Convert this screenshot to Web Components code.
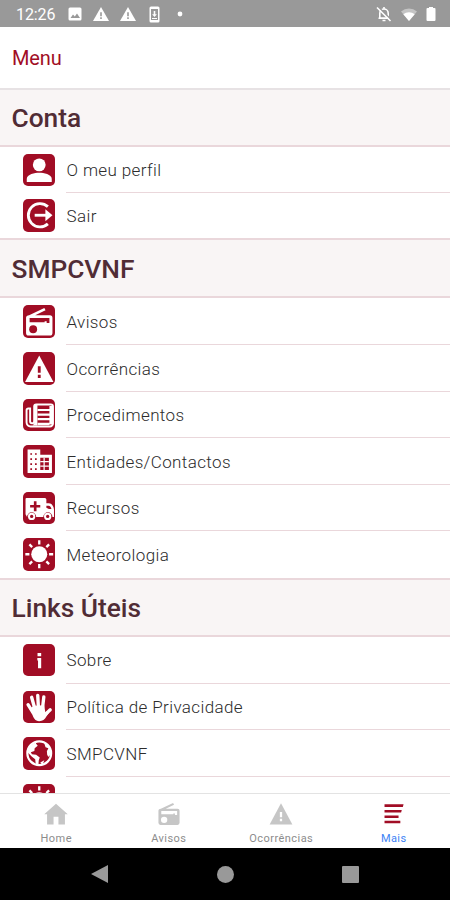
<!DOCTYPE html>
<html lang="pt">
<head>
<meta charset="utf-8">
<meta name="viewport" content="width=device-width, initial-scale=1">
<title>Menu</title>
<style>
    html, body { margin: 0; height: 100%; }
    body {
        font-family: Roboto, "Liberation Sans", sans-serif;
        background: #fff;
        overflow: hidden;
        --primary: #a10d25;
        --line: #ead7db;
    }
</style>
</head>
<body>
<app-screen>
    <status-bar slot="status"></status-bar>
    <app-toolbar slot="toolbar">Menu</app-toolbar>

    <menu-section style="--head: 57px; --row: 45.7px; --top: 0px; --drop: 0px">
        <span slot="title">Conta</span>
        <menu-item icon="person">O meu perfil</menu-item>
        <menu-item icon="exit">Sair</menu-item>
    </menu-section>
    <menu-section>
        <span slot="title">SMPCVNF</span>
        <menu-item icon="radio">Avisos</menu-item>
        <menu-item icon="warning">Ocorrências</menu-item>
        <menu-item icon="paper">Procedimentos</menu-item>
        <menu-item icon="building">Entidades/Contactos</menu-item>
        <menu-item icon="ambulance">Recursos</menu-item>
        <menu-item icon="sun">Meteorologia</menu-item>
    </menu-section>
    <menu-section style="--head: 59px">
        <span slot="title">Links Úteis</span>
        <menu-item icon="info">Sobre</menu-item>
        <menu-item icon="hand">Política de Privacidade</menu-item>
        <menu-item icon="globe">SMPCVNF</menu-item>
        <menu-item icon="sun"></menu-item>
    </menu-section>

    <tab-bar slot="tabs">
        <tab-button icon="home">Home</tab-button>
        <tab-button icon="radio">Avisos</tab-button>
        <tab-button icon="warning">Ocorrências</tab-button>
        <tab-button icon="list" selected>Mais</tab-button>
    </tab-bar>
    <nav-bar slot="nav"></nav-bar>
</app-screen>

<script>
(function () {

    // 32x32 shapes; class "hole" takes the colour behind the icon
    const icons = {
        person: `<circle cx="16" cy="10.700" r="6.300"/><path d="M3.700 27.500v-3c0-4.400 8-6 12.300-6s12.300 1.600 12.300 6v3z"/>`,
        exit: `<g fill="none" stroke="currentColor" stroke-width="2.800"><path d="M24.500 7.500A11.500 11.500 0 1 0 24.500 24.500"/><path d="M11.500 16H25"/></g><path d="M22 10l7 6-7 6z"/>`,
        radio: `<path d="M6 10L21 3l1.200 2.200L12 10h14.500a2.500 2.500 0 0 1 2.500 2.500v15a2.500 2.500 0 0 1-2.500 2.500h-21A2.500 2.500 0 0 1 3 27.500v-15C3 11 4.200 10 6 10z"/><path class="hole" d="M6.500 12.800h19.500v5h-2.700v-1.800h-2V17H6.500z"/><circle class="hole" cx="10" cy="23.800" r="3.900"/>`,
        warning: `<path d="M16 3.500L30 29.500H2z"/><path class="hole" d="M14.600 14h2.800v6.500h-2.800zm0 8.500h2.800v3h-2.800z"/>`,
        paper: `<path fill="none" stroke="currentColor" stroke-width="1.900" d="M11 7.500a2 2 0 0 1 2-2h14.500a2 2 0 0 1 2 2V24a3 3 0 0 1-3 3h-19a4 4 0 0 1-4-4V11a1.700 1.700 0 0 1 1.700-1.700H7V22a2 2 0 0 0 4 0z"/><path d="M11 6h3.200v20H9.500l1.500-2zM14.500 9.800H26v2.100H14.500zm0 4.500H26v2.100H14.500zm0 4.500H26v2.100H14.500zm0 4.500H26v2.500H14.500zM26 7h3v18h-3z"/>`,
        building: `<path d="M4.500 4.500H17V9.500H28.500v18H4.500z"/><path class="hole" d="M7.200 8h1.700v1.700H7.200zm4.600 0h1.700v1.700h-1.700zM7.200 13h1.700v1.700H7.200zm4.600 0h1.700v1.700h-1.700zM7.200 18h1.700v1.700H7.200zm4.600 0h1.700v1.700h-1.700zM7.200 23h1.700v1.700H7.200zm4.600 0h1.700v1.700h-1.700zM17 12.500h8.500v12.200H17z"/><path d="M20.200 12.500h1.200v12.200h-1.200zM17 15.800h8.500V17H17zm0 4.300h8.500v1.200H17z"/>`,
        ambulance: `<path d="M3.500 6h18A1.500 1.500 0 0 1 23 7.500V11h2.500c3 0 5 3.500 5 6.500v7H29a4.500 4.500 0 0 0-9 0h-7a4.500 4.500 0 0 0-9 0L2.500 22V7A1 1 0 0 1 3.500 6z"/><path class="hole" d="M10.700 9h2.600v3.700H17v2.600h-3.700V19h-2.600v-3.700H7v-2.600h3.700zM23 13.500h2.200c1.500 0 2.500 1.500 2.800 3.300h-2.500L23 15.500z"/><circle cx="8.500" cy="24" r="3.600"/><circle cx="24.300" cy="24" r="3.600"/><g class="hole"><circle cx="8.500" cy="24" r="1.600"/><circle cx="24.300" cy="24" r="1.600"/></g>`,
        sun: `<circle cx="16" cy="16" r="7.900"/><path fill="none" stroke="currentColor" stroke-width="2.300" d="M16 2.300v4M16 25.700v4M2.300 16h4M25.700 16h4M6.300 6.300l2.700 2.700M23 23l2.700 2.700M6.300 25.700L9 23M23 9l2.700-2.700"/>`,
        info: `<path d="M14.300 8.800h3.600v3.200h-3.600zm-.200 5h3.800v10h-3.100v-7.600h-.700z"/>`,
        hand: `<path fill="none" stroke="currentColor" stroke-width="3.300" stroke-linecap="round" d="M5 13.500l5 8M8.500 6.200l3.500 12.500M14.500 4.300l.800 14M20.500 5.800l-1.500 13M26.800 18.500l-5.300 5"/><path d="M7.500 17l3-2.500 10.300-.500 1.200 7 2.500-1.500 1 2.200-2.500 3.500c-1.500 2.800-3.700 4.600-7 4.600-4.200 0-5.700-3.300-6.700-6.300z"/>`,
        globe: `<circle cx="16" cy="16" r="11.700" fill="none" stroke="currentColor" stroke-width="2.200"/><path d="M14.500 4.200l-1.800 2.300 1.800 2-3 2.500-.300 2.700-3.500 1.200 1.100 2.100 4.100.500 3.600 2.600-1 3-.300 4.200-2.700-1-.500-4.300-3.200-2.600L4.500 15 7 8.500zM21 6.500l1-.700 5 5.700 1 5.500-2.300 1.700-.700 1-1.200-2.200-.300-3.500 1.500-3-2.800-1zM17 25l4-2-1.800 4.500z"/>`,
        home: `<path d="M16 4L1.500 17H5v12.500h8V20h6v9.500h8V17h3.500z"/>`,
        list: `<path d="M3.500 3.300h26.500l-1 3.500H3.500zm0 8h24l-.900 3.400H3.500zm0 7.600h19.500v3.200H3.500zm0 7.200h22v3.500h-22z"/>`
    };

    function svg(name) {
        return `<svg viewBox="0 0 32 32" fill="currentColor">${icons[name] || ''}</svg>`;
    }

    function define(tag, html) {
        customElements.define(tag, class extends HTMLElement {
            constructor() {
                super();
                this.attachShadow({ mode: 'open' });
                this.shadowRoot.innerHTML = typeof html == 'function' ? html(this) : html;
            }
        });
    }

    define('app-screen', `
        <style>
        :host { display: flex; flex-direction: column; height: 900px; width: 450px; overflow: hidden; }
        main { flex: 1; min-height: 0; overflow: hidden; }
        </style>
        <slot name="status"></slot>
        <slot name="toolbar"></slot>
        <main><slot></slot></main>
        <slot name="tabs"></slot>
        <slot name="nav"></slot>
    `);

    define('status-bar', `
        <style>
        :host { display: flex; align-items: center; height: 27px; flex: none; box-sizing: border-box; padding: 1px 14px 0 16px; background: #999; color: #fff; font-size: 16px; }
        .time { width: 52px; letter-spacing: -.1px; }
        .left { display: flex; align-items: center; gap: 11px; flex: 1; }
        .right { display: flex; align-items: center; gap: 9px; }
        .hole { fill: #999; }
        svg { display: block; }
        </style>
        <span class="time">12:26</span>
        <div class="left">
            <svg width="14" height="14" fill="#fff"><rect x=".5" y=".5" width="13" height="13" rx="1.500"/><path class="hole" d="M2.500 11l2.500-3.500 1.800 2 2.200-3 3 4.500z"/></svg>
            <svg width="16" height="14" fill="#fff"><path d="M8 0l8 14H0z"/><path class="hole" d="M7.200 5.300h1.600v4H7.200zm0 5h1.600v1.700H7.200z"/></svg>
            <svg width="16" height="14" fill="#fff"><path d="M8 0l8 14H0z"/><path class="hole" d="M7.200 5.300h1.600v4H7.200zm0 5h1.600v1.700H7.200z"/></svg>
            <svg width="11" height="17" style="margin-left: 2px" fill="#fff"><rect x=".500" y=".500" width="10" height="16" rx="1.500"/><path class="hole" d="M2 3h7v11H2z"/><path d="M4.700 5h1.600v3.300h1.600L5.500 11 3.100 8.300h1.600zM3 12h5v1H3z"/></svg>
            <svg width="6" height="6" style="margin-left: 6px" fill="#fff"><circle cx="3" cy="3" r="2.400"/></svg>
        </div>
        <div class="right">
            <svg width="16" height="16" fill="none" stroke="#fff"><path stroke-width="1.600" d="M3.800 12V7.200a4.200 4.200 0 0 1 8.400 0V12zM2.500 12.200h11M8 1v2M6.500 14.500h3"/><path stroke="#999" stroke-width="1.500" d="M2.500 1L15.500 14"/><path stroke-width="1.600" d="M1 1.500L14.500 15"/></svg>
            <svg width="16" height="13" fill="#fff"><path fill="#c4c4c4" d="M0 3.500a12.500 12.500 0 0 1 16 0L8 13z"/><path d="M2.300 6.200a9 9 0 0 1 11.400 0L8 13z"/></svg>
            <svg width="10" height="14" fill="#fff"><path d="M3 0h4v1h1.500a1 1 0 0 1 1 1v11a1 1 0 0 1-1 1h-7a1 1 0 0 1-1-1V2a1 1 0 0 1 1-1H3z"/></svg>
        </div>
    `);

    define('app-toolbar', `
        <style>
        :host { display: flex; align-items: center; height: 63px; flex: none; box-sizing: border-box; padding: 1px 12px 0; border-bottom: 2px solid #e7e2e4; color: var(--primary); font-size: 20px; letter-spacing: -.15px; }
        </style>
        <slot></slot>
    `);

    define('menu-section', `
        <style>
        :host { display: block; }
        header {
            display: flex; align-items: center; box-sizing: border-box;
            height: var(--head, 60px); padding: var(--drop, 2px) 11.500px 0;
            background: #f9f5f5; color: #512c35;
            border-top: var(--top, 2px) solid var(--line);
            border-bottom: 2px solid var(--line);
            font-size: 26.300px; font-weight: 500;
        }
        </style>
        <header><slot name="title"></slot></header>
        <slot></slot>
    `);

    define('menu-item', el => `
        <style>
        :host { display: flex; align-items: stretch; height: var(--row, 46.6px); padding-left: 22.700px; }
        .badge { width: 32.500px; height: 32.500px; align-self: center; border-radius: 5px; background: var(--primary); color: #fff; }
        svg { display: block; width: 100%; height: 100%; }
        .hole { fill: var(--primary); }
        .label { flex: 1; display: flex; align-items: center; margin-left: 11.300px; padding-top: 1.500px; border-bottom: 1.500px solid var(--line); font-size: 17px; font-weight: 300; letter-spacing: .38px; color: #2c2c2c; }
        :host(:last-of-type) .label { border-bottom: 0; }
        </style>
        <div class="badge">${svg(el.getAttribute('icon'))}</div>
        <div class="label"><slot></slot></div>
    `);

    define('tab-bar', `
        <style>
        :host { display: flex; height: 55px; flex: none; box-sizing: border-box; border-top: 1px solid #e3e3e3; background: #fff; }
        </style>
        <slot></slot>
    `);

    define('tab-button', el => `
        <style>
        :host { flex: 1; display: flex; flex-direction: column; align-items: center; gap: 5px; padding-top: 6px; font-size: 11px; letter-spacing: .45px; color: #8c8c8c; }
        :host([selected]) { color: #3d82f5; }
        svg { display: block; width: 26px; height: 27px; color: #c6c6c6; }
        :host([selected]) svg { width: 23px; color: var(--primary); }
        .hole { fill: #fff; }
        </style>
        ${svg(el.getAttribute('icon'))}
        <span><slot></slot></span>
    `);

    define('nav-bar', `
        <style>
        :host { display: flex; justify-content: space-between; align-items: center; height: 52px; flex: none; box-sizing: border-box; padding: 0 91px; background: #000; }
        svg { display: block; }
        </style>
        <svg width="17" height="18" fill="#999"><path d="M17 0v18L0 9z"/></svg>
        <svg width="17" height="17" fill="#999"><circle cx="8.500" cy="8.500" r="8.500"/></svg>
        <svg width="17" height="17" fill="#999"><rect width="17" height="17" rx="1"/></svg>
    `);

}());
</script>
</body>
</html>
